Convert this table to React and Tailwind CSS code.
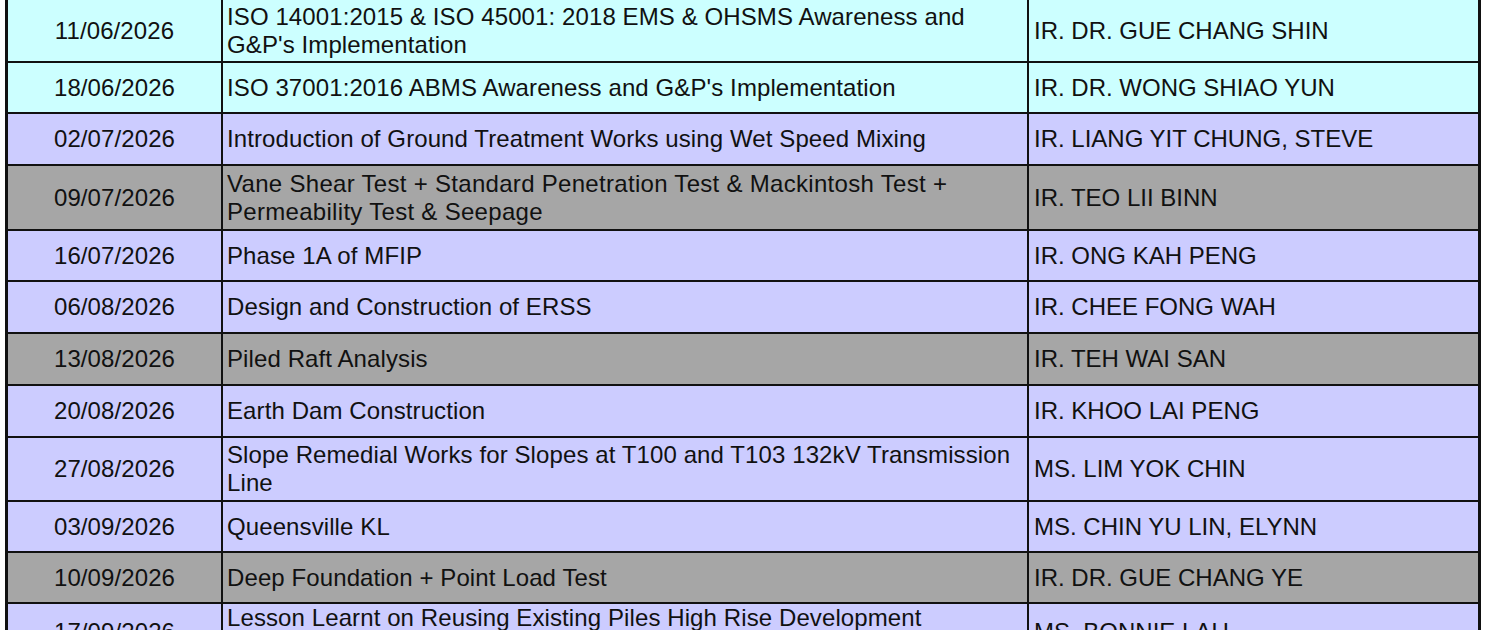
import React from "react";

const rows = [
  { d: "11/06/2026", t: ["ISO 14001:2015 & ISO 45001: 2018 EMS & OHSMS Awareness and", "G&P's Implementation"], n: "IR. DR. GUE CHANG SHIN", c: "cyan", h: "h-[63px]" },
  { d: "18/06/2026", t: ["ISO 37001:2016 ABMS Awareness and G&P's Implementation"], n: "IR. DR. WONG SHIAO YUN", c: "cyan", h: "h-[51px]" },
  { d: "02/07/2026", t: ["Introduction of Ground Treatment Works using Wet Speed Mixing"], n: "IR. LIANG YIT CHUNG, STEVE", c: "lav", h: "h-[52px]" },
  { d: "09/07/2026", t: ["Vane Shear Test + Standard Penetration Test & Mackintosh Test +", "Permeability Test & Seepage"], n: "IR. TEO LII BINN", c: "gray", h: "h-[65px]", wide: true },
  { d: "16/07/2026", t: ["Phase 1A of MFIP"], n: "IR. ONG KAH PENG", c: "lav", h: "h-[51px]" },
  { d: "06/08/2026", t: ["Design and Construction of ERSS"], n: "IR. CHEE FONG WAH", c: "lav", h: "h-[52px]" },
  { d: "13/08/2026", t: ["Piled Raft Analysis"], n: "IR. TEH WAI SAN", c: "gray", h: "h-[52px]" },
  { d: "20/08/2026", t: ["Earth Dam Construction"], n: "IR. KHOO LAI PENG", c: "lav", h: "h-[52px]" },
  { d: "27/08/2026", t: ["Slope Remedial Works for Slopes at T100 and T103 132kV Transmission", "Line"], n: "MS. LIM YOK CHIN", c: "lav", h: "h-[64px]" },
  { d: "03/09/2026", t: ["Queensville KL"], n: "MS. CHIN YU LIN, ELYNN", c: "lav", h: "h-[51px]" },
  { d: "10/09/2026", t: ["Deep Foundation + Point Load Test"], n: "IR. DR. GUE CHANG YE", c: "gray", h: "h-[51px]" },
  { d: "17/09/2026", t: ["Lesson Learnt on Reusing Existing Piles High Rise Development", "Projects"], n: "MS. BONNIE LAU", c: "lav", h: "h-[56px]" },
];

const bg = {
  cyan: "bg-[#ccffff]",
  lav: "bg-[#ccccff]",
  gray: "bg-[#a6a6a6]",
};

export default function App() {
  return (
    <div className="w-[1500px] h-[630px] overflow-hidden bg-white" style={{ fontFamily: '"Liberation Sans", Arial, sans-serif' }}>
      <div className="ml-[5px] w-[1476px] border-x-[3px] border-[#111]">
        {rows.map((r, i) => (
          <div key={i} className={`grid grid-cols-[215px_806px_1fr] border-b-2 border-[#111] ${r.h} ${bg[r.c]} text-[24px] leading-[28px] text-[#111]`}>
            <div className="border-r-2 border-[#111] flex items-center justify-center tracking-[0.1px]">{r.d}</div>
            <div className={`border-r-2 border-[#111] flex flex-col justify-center pl-[4px] whitespace-nowrap ${r.wide ? "tracking-[0.3px]" : "tracking-[0.1px]"}`}>
              {r.t.map((l, j) => (
                <div key={j}>{l}</div>
              ))}
            </div>
            <div className="flex items-center pl-[5px] whitespace-nowrap">{r.n}</div>
          </div>
        ))}
      </div>
    </div>
  );
}
